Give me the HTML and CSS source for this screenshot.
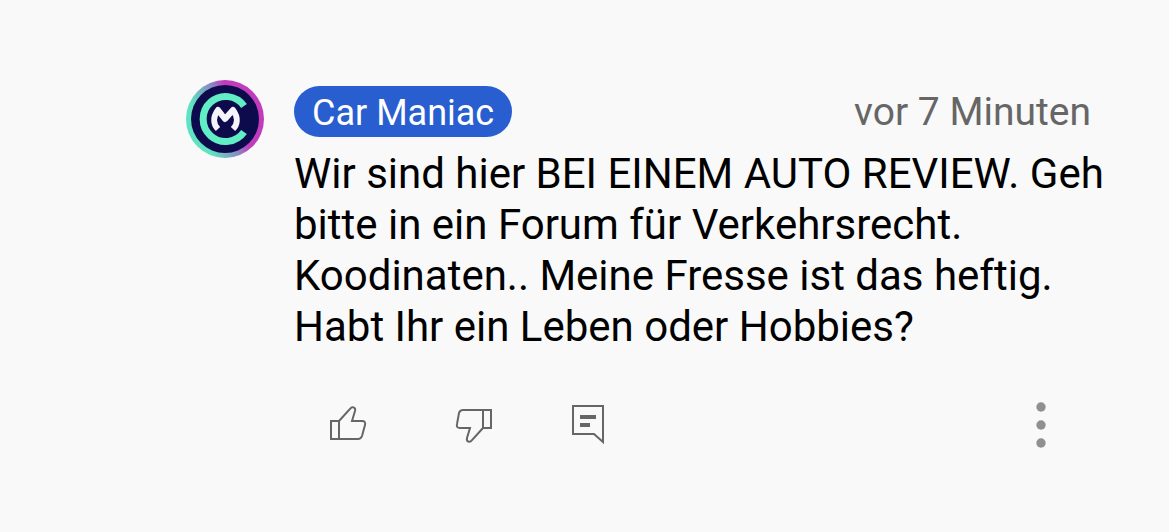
FILE: index.html
```html
<!DOCTYPE html>
<html lang="de">
<head>
    <meta charset="UTF-8">
    <meta name="viewport" content="width=device-width, initial-scale=1.0">
    <title>Kommentar</title>
    <link rel="stylesheet" href="styles.css">
</head>
<body>

    <!-- Comment -->
    <article class="comment">
        <svg class="avatar" viewBox="0 0 78 78" role="img" aria-label="Car Maniac">
            <defs>
                <linearGradient id="ring" x1="0" y1="0.7" x2="1" y2="0.3">
                    <stop offset="0.2" stop-color="#5fe3c0"/>
                    <stop offset="0.5" stop-color="#8c86c4"/>
                    <stop offset="0.65" stop-color="#c13cbd"/>
                </linearGradient>
            </defs>
            <circle cx="39" cy="39" r="39" fill="url(#ring)"/>
            <circle cx="39" cy="39" r="34" fill="#0e0b4d"/>
            <path d="M58 26A22.500 22.500 0 1 0 58 52" fill="none" stroke="#62eec5" stroke-width="7"/>
            <path d="M32 49C28 45 26 38 32 30L39 39L47 30C53 38 51 45 47 49" fill="none" stroke="#f4f4fa" stroke-width="6" stroke-linejoin="round"/>
        </svg>

        <div class="comment-main">
            <header class="comment-header">
                <a class="author" href="#">Car Maniac</a>
                <time class="time">vor 7 Minuten</time>
            </header>

            <p class="comment-text">Wir sind hier BEI EINEM AUTO REVIEW. Geh bitte in ein Forum für Verkehrsrecht. Koodinaten.. Meine Fresse ist das heftig. Habt Ihr ein Leben oder Hobbies?</p>

            <!-- Action Buttons -->
            <div class="actions">
                <button type="button" aria-label="Mag ich">
                    <svg viewBox="0 0 60 60">
                        <path d="M11 26H19V44H11ZM19 26L30 14C32 11 36 12 35 16L32 26H42Q46 26 45 30L42 41Q41 44 38 44H19"/>
                    </svg>
                </button>
                <button type="button" aria-label="Mag ich nicht">
                    <svg viewBox="-5 0 60 60">
                        <path d="M46 15H38V33H46ZM38 33L27 45C25 48 21 47 22 43L25 33H15Q11 33 12 29L14 18Q15 15 18 15H38"/>
                    </svg>
                </button>
                <button type="button" aria-label="Antworten">
                    <svg viewBox="0 0 60 60">
                        <path d="M13 11H43V47L34 39H13Z"/>
                        <path class="solid" d="M20 20H36V24H20ZM20 28H30V32H20Z"/>
                    </svg>
                </button>
                <button type="button" class="more" aria-label="Mehr">
                    <svg viewBox="0 0 60 60">
                        <circle cx="30" cy="12" r="4.700"/>
                        <circle cx="30" cy="30" r="4.700"/>
                        <circle cx="30" cy="48" r="4.700"/>
                    </svg>
                </button>
            </div>
        </div>
    </article>

</body>
</html>
```
FILE: styles.css
```css
/* General Styles */
body {
    font-family: Roboto, Arial, sans-serif;
    background-color: #f9f9f9;
    margin: 0;
    color: #000;
}

.comment {
    display: flex;
    align-items: flex-start;
    gap: 30px;
    padding: 80px 60px 76px 186px;
}

.avatar {
    flex: none;
    width: 78px;
    height: 78px;
}

.comment-main {
    flex: 1;
    min-width: 0;
    padding-top: 6px;
}

/* Name and time */
.comment-header {
    display: flex;
    justify-content: space-between;
    align-items: baseline;
    padding-right: 18px;
}

.author {
    padding: 3px 18px 0;
    border-radius: 26px;
    background-color: #285ecf;
    color: #fff;
    font-size: 36px;
    line-height: 48px;
    text-decoration: none;
}

.time {
    color: #666;
    font-size: 39px;
    line-height: 48px;
}

.comment-text {
    margin: 11px 0 43px;
    font-size: 42px;
    line-height: 51px;
}

/* Action Buttons */
.actions {
    display: flex;
    gap: 60px;
    padding: 0 38px 0 26px;
}

.actions button {
    width: 60px;
    height: 60px;
    padding: 0;
    border: none;
    background: none;
    cursor: pointer;
}

.actions svg {
    display: block;
    width: 60px;
    height: 60px;
    fill: none;
    stroke: #666;
    stroke-width: 2;
    stroke-linejoin: miter;
}

.actions .solid {
    fill: #666;
    stroke: none;
}

.actions .more {
    margin-left: auto;
}

.actions .more svg {
    fill: #909090;
    stroke: none;
}
```
